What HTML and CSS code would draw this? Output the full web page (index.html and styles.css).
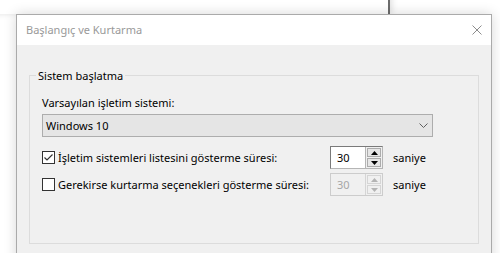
FILE: index.html
```html
<!DOCTYPE html>
<html lang="tr">
<head>
<meta charset="utf-8">
<title>Başlangıç ve Kurtarma</title>
<link rel="stylesheet" href="styles.css">
</head>
<body>
<div class="desktop">
  <div class="bgwin"></div>
  <div class="dialog">
    <div class="titlebar">
      <span class="title">Başlangıç ve Kurtarma</span>
      <svg class="close" width="10" height="10" viewBox="0 0 10 10"><path d="M0.5 0.5 L9.5 9.5 M9.5 0.5 L0.5 9.5" stroke="#8c8c8c" stroke-width="1" fill="none"/></svg>
    </div>
    <div class="body">
      <fieldset class="group">
        <legend>Sistem başlatma</legend>
        <div class="label">Varsayılan işletim sistemi:</div>
        <div class="combo">
          <span>Windows 10</span>
          <svg class="chev" width="9" height="5" viewBox="0 0 9 5"><path d="M0.5 0.5 L4.5 4.5 L8.5 0.5" stroke="#606060" stroke-width="1" fill="none"/></svg>
        </div>
        <div class="rows">
          <div class="row">
            <label class="check">
              <span class="box"><svg width="11" height="11" viewBox="0 0 11 11"><path d="M1.5 5.5 L4 8 L9.5 2.5" stroke="#333" stroke-width="1.2" fill="none"/></svg></span>
              <span>İşletim sistemleri listesini gösterme süresi:</span>
            </label>
            <div class="spin">
              <span class="value">30</span>
              <span class="btns">
                <span class="btn"><svg width="7" height="4" viewBox="0 0 7 4"><path d="M0 4 L3.5 0 L7 4 Z" fill="#000"/></svg></span>
                <span class="btn"><svg width="7" height="4" viewBox="0 0 7 4"><path d="M0 0 L3.5 4 L7 0 Z" fill="#000"/></svg></span>
              </span>
            </div>
            <span class="unit">saniye</span>
          </div>
          <div class="row">
            <label class="check">
              <span class="box"></span>
              <span>Gerekirse kurtarma seçenekleri gösterme süresi:</span>
            </label>
            <div class="spin disabled">
              <span class="value">30</span>
              <span class="btns">
                <span class="btn"><svg width="7" height="4" viewBox="0 0 7 4"><path d="M0 4 L3.5 0 L7 4 Z" fill="#b4b4b4"/></svg></span>
                <span class="btn"><svg width="7" height="4" viewBox="0 0 7 4"><path d="M0 0 L3.5 4 L7 0 Z" fill="#b4b4b4"/></svg></span>
              </span>
            </div>
            <span class="unit">saniye</span>
          </div>
        </div>
      </fieldset>
    </div>
  </div>
</div>
</body>
</html>
```

FILE: styles.css
```css
html, body {
  margin: 0;
  padding: 0;
  background: #ffffff;
}
.desktop {
  position: relative;
  width: 500px;
  height: 253px;
  overflow: hidden;
  font-family: "Noto Sans", "DejaVu Sans", sans-serif;
  font-size: 11px;
  color: #000;
}
.bgwin {
  position: absolute;
  left: -20px;
  top: -20px;
  width: 408px;
  height: 34px;
  background: #ffffff;
  border-right: 2px solid #6c6c6c;
  box-shadow: 2px 0 6px rgba(0, 0, 0, 0.12);
}
.dialog {
  position: absolute;
  left: 16px;
  top: 14px;
  width: 474px;
  height: 260px;
  border: 1px solid #aaaaaa;
  background: #f0f0f0;
  box-shadow: 0 0 12px rgba(0, 0, 0, 0.16);
  display: flex;
  flex-direction: column;
}
.titlebar {
  height: 30px;
  flex: none;
  background: #ffffff;
  display: flex;
  align-items: center;
  justify-content: space-between;
  padding: 0 9px 0 9px;
}
.title {
  color: #999999;
  line-height: 16px;
}
.close {
  display: block;
}
.body {
  padding: 23px 12px 0 12px;
}
.group {
  margin: 0;
  padding: 12px 12px 0 12px;
  border: 1px solid #dcdcdc;
  height: 162px;
  min-width: 0;
}
.group legend {
  margin-left: -6px;
  padding: 0 2px;
  line-height: 15px;
}
.label {
  line-height: 16px;
}
.combo {
  box-sizing: border-box;
  width: 391px;
  margin-top: 3px;
  height: 23px;
  border: 1px solid #adadad;
  background: #e5e5e5;
  display: flex;
  align-items: center;
  justify-content: space-between;
  padding: 0 4px 0 3px;
  line-height: 16px;
}
.chev {
  display: block;
}
.rows {
  margin-top: 9px;
  display: flex;
  flex-direction: column;
  gap: 4px;
}
.row {
  display: grid;
  grid-template-columns: 278px 53px auto;
  column-gap: 10px;
  align-items: center;
  height: 23px;
}
.check {
  display: flex;
  align-items: center;
  gap: 3px;
  white-space: nowrap;
}
.box {
  width: 11px;
  height: 11px;
  border: 1px solid #333333;
  background: #ffffff;
  display: flex;
  flex: none;
}
.spin {
  box-sizing: border-box;
  height: 23px;
  display: flex;
  border: 1px solid #7a7a7a;
  border-right-color: #b5b5b5;
  border-bottom-color: #b5b5b5;
  background: #ffffff;
}
.spin .value {
  flex: 1;
  padding-left: 6px;
  line-height: 21px;
}
.btns {
  width: 16px;
  display: flex;
  flex-direction: column;
  background: #f0f0f0;
  border-left: 1px solid #b5b5b5;
}
.btn {
  flex: 1;
  margin: 1px;
  border: 1px solid #acacac;
  background: #e6e6e6;
  display: flex;
  align-items: center;
  justify-content: center;
}
.btn + .btn {
  margin-top: 0;
}
.spin.disabled {
  border-color: #cccccc;
  background: #f0f0f0;
  color: #a6a6a6;
}
.spin.disabled .btns {
  border-left-color: #d5d5d5;
}
.spin.disabled .btn {
  border-color: #d5d5d5;
  background: #f0f0f0;
}
```
